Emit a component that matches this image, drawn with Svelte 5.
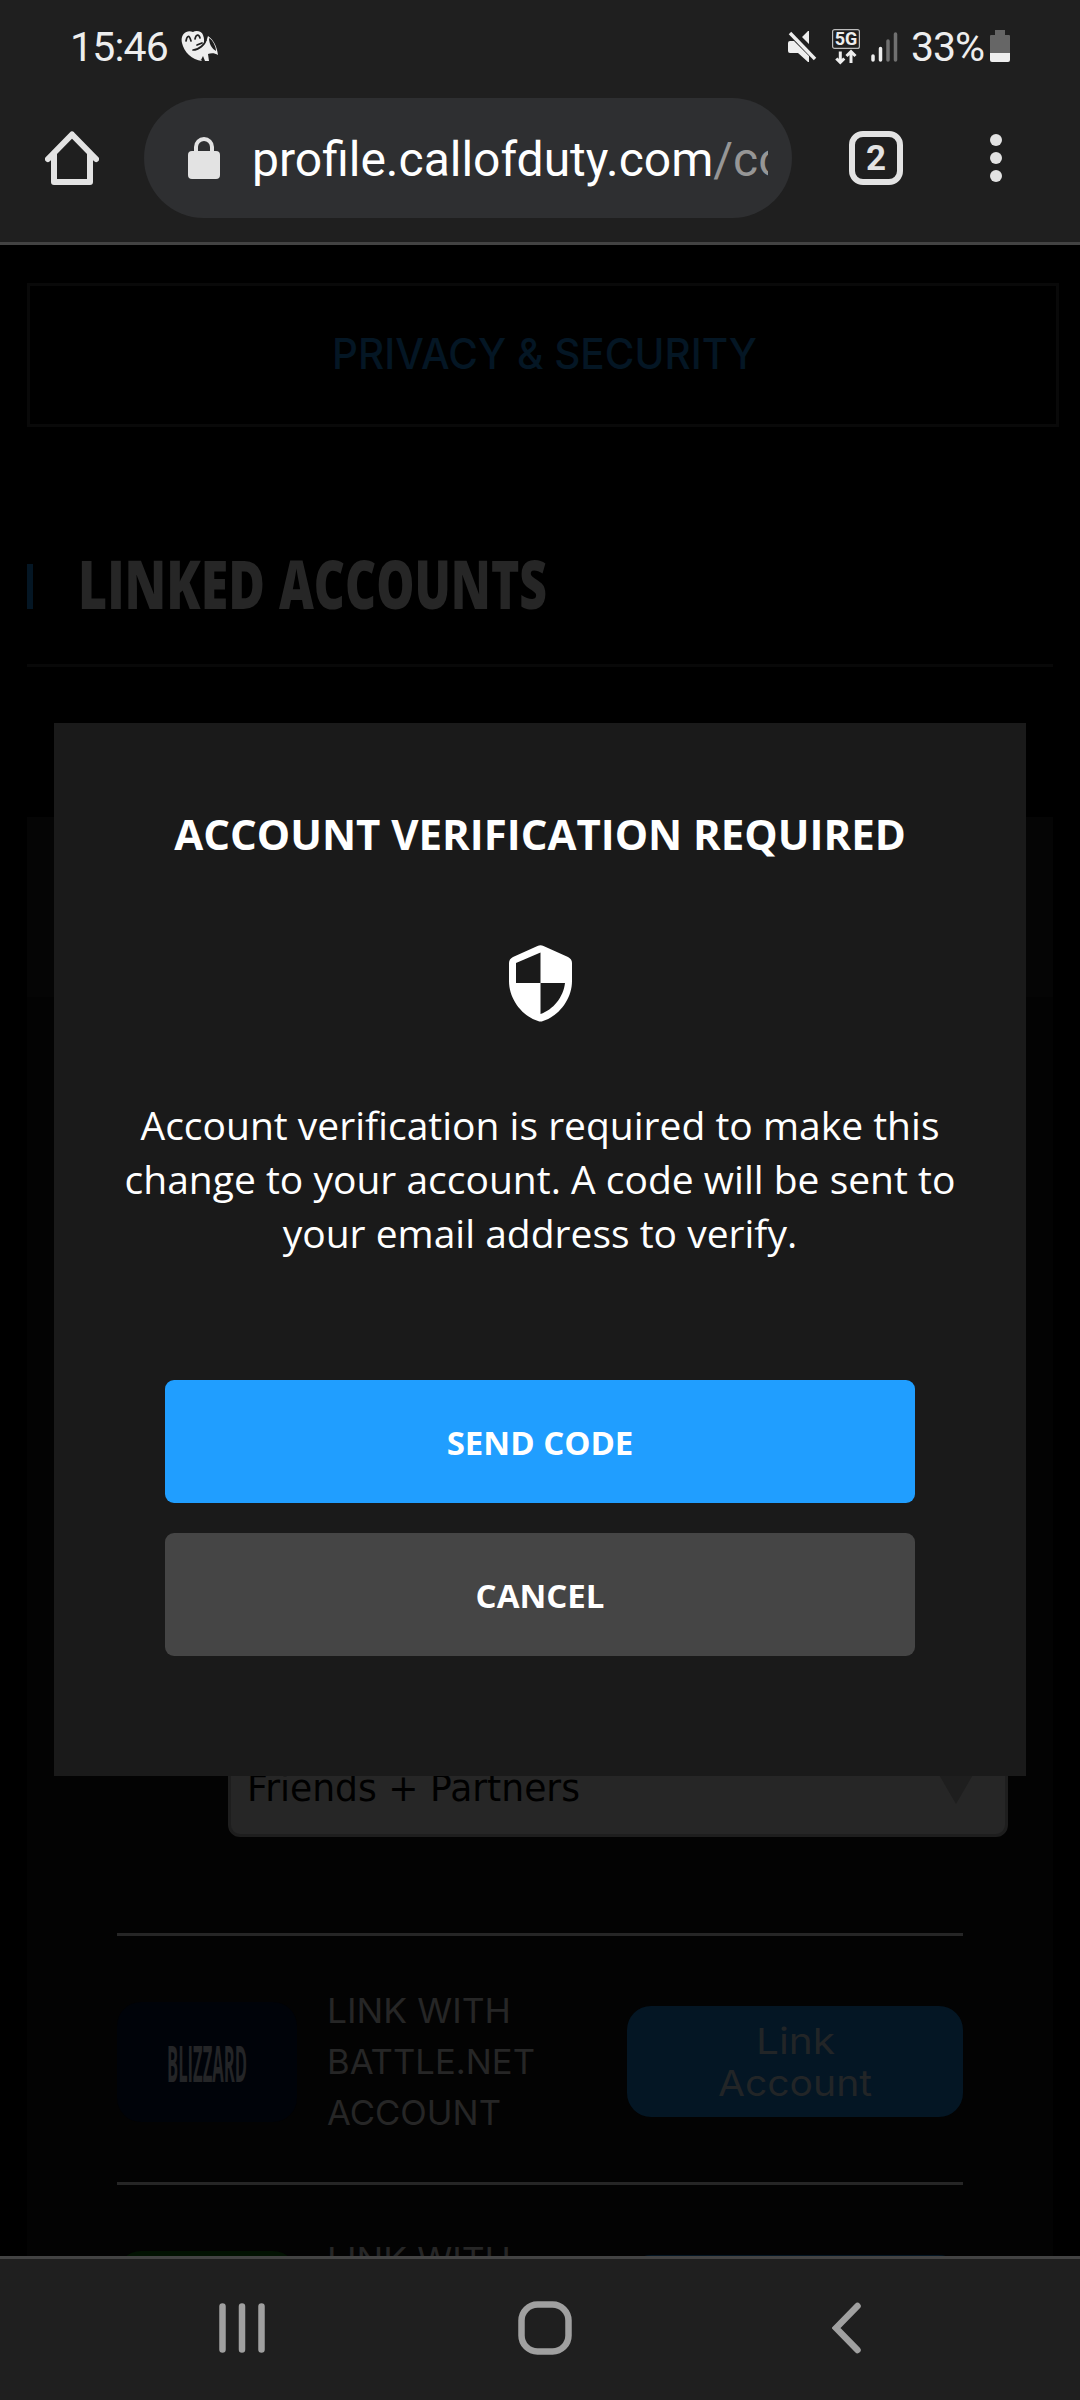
<script>
  const links = [
    { brand: 'blizzard', lines: [['LINK WITH', 184], ['BATTLE.NET', 208], ['ACCOUNT', 174]] },
    { brand: 'xbox', lines: [['LINK WITH', 184], ['XBOX', 96], ['ACCOUNT', 174]] }
  ];
</script>

{#snippet fitted(text, width, baseline, height)}
  <svg class="fitted" {width} {height}>
    <text x="0" y={baseline} textLength={width} lengthAdjust="spacingAndGlyphs">{text}</text>
  </svg>
{/snippet}

<div class="screen">
  <header>
    <div class="status">
      <span class="clock">15:46</span>
      <svg class="app-icon" width="38" height="32" viewBox="0 0 38 32">
        <path d="M12 2C15 0 21 1 22 5C24 10 23 14 21 17L16 20C14 23 17 27 21 31C11 30 3 22 1 13C-1 5 5-1 12 2Z" fill="#eee" />
        <path d="M15 20C20 19 25 14 27 6C33 10 36 17 37 25C34 23 30 23 27 24L28 31H24L22 26L20 30C17 28 14 25 15 20Z" fill="#eee" />
        <path d="M5 11C6 6 8 4 10 11M14 9C15 4 18 4 19 8M12 20C18 20 24 14 25 10M16 15L21 13" fill="none" stroke="#1f1f1f" stroke-width="1.7" stroke-linecap="round" />
        <path d="M28 8C32 10 35 17 35 21C31 19 28 14 28 8Z" fill="#1f1f1f" />
      </svg>
      <div class="indicators">
        <svg width="29" height="32" viewBox="0 0 29 32">
          <path d="M0 12Q0 10 2 10H6L21 25V31H20L10 22H2Q0 22 0 20ZM21 0V13L14 6L20 0Z" fill="#eee" />
          <path d="M2 2L27 28" stroke="#eee" stroke-width="3.4" />
        </svg>
        <svg class="net" width="28" height="36" viewBox="0 0 28 36">
          <rect x=".6" y=".6" width="26.8" height="18.8" rx="2" fill="none" stroke="#bbb" stroke-width="1.2" />
          <text x="14" y="16.3" text-anchor="middle" class="gen">5G</text>
          <path d="M8.300 22.500V33M4.300 29.500L8.300 33.500L12.300 29.500M19 34V24M14.500 27L19 22.500L23.500 27" fill="none" stroke="#eee" stroke-width="3" />
        </svg>
        <svg class="signal" width="28" height="30" viewBox="0 0 28 30">
          <path d="M2 24V28M9.500 16.500V28" stroke="#eee" stroke-width="3.500" stroke-linecap="round" />
          <path d="M17 9V28M24.500 2V28" stroke="#707070" stroke-width="3.500" stroke-linecap="round" />
        </svg>
        <span class="percent">33%</span>
        <svg class="battery" width="20" height="32" viewBox="0 0 20 32">
          <path d="M5 0H15V5H19Q20 5 20 6V23H0V6Q0 5 1 5H5Z" fill="#666" />
          <path d="M0 23H20V30Q20 32 18 32H2Q0 32 0 30Z" fill="#eee" />
        </svg>
      </div>
    </div>
    <div class="toolbar">
      <svg class="home" width="54" height="54" viewBox="0 0 54 54">
        <path d="M3 28L27 3.500L51 28M9 23V51H45V23" fill="none" stroke="#e3e3e3" stroke-width="6" stroke-linecap="round" stroke-linejoin="round" />
      </svg>
      <div class="address">
        <svg width="32" height="42" viewBox="0 0 32 42">
          <rect y="14" width="32" height="28" rx="4" fill="#e3e3e3" />
          <path d="M8 15V10a8 8 0 0 1 16 0V15" fill="none" stroke="#e3e3e3" stroke-width="4" />
        </svg>
        <div class="url">profile.callofduty.com<span>/cod/info</span></div>
      </div>
      <div class="tabs">2</div>
      <svg class="more" width="12" height="48" viewBox="0 0 12 48">
        <circle cx="6" cy="6" r="6" /><circle cx="6" cy="24" r="6" /><circle cx="6" cy="42" r="6" />
      </svg>
    </div>
  </header>

  <main>
    <div class="privacy">{@render fitted('PRIVACY & SECURITY', 425, 31, 32)}</div>
    <div class="section">
      <i></i>
      <h2>
        {@render fitted('LINKED', 187, 48, 48)}
        {@render fitted('ACCOUNTS', 268, 48, 48)}
      </h2>
    </div>
    <div class="panel">
      <div class="panel-head"></div>
      <div class="select">
        {@render fitted('Friends + Partners', 333, 29, 32)}
        <svg class="arrow" width="36" height="31" viewBox="0 0 36 31"><path d="M0 0H36L18 31Z" fill="#1e1e1e" /></svg>
      </div>
      <ul>
        {#each links as link}
          <li>
            <div class="tile {link.brand}">
              {#if link.brand === 'blizzard'}
                <svg width="80" height="38" viewBox="0 0 80 38">
                  <text x="0" y="37" textLength="80" lengthAdjust="spacingAndGlyphs">BLIZZARD</text>
                </svg>
              {/if}
            </div>
            <div class="label">
              {#each link.lines as [text, width]}
                {@render fitted(text, width, 37.5, 51)}
              {/each}
            </div>
            <button class="link">
              {@render fitted('Link', 79, 34, 42)}
              {@render fitted('Account', 154, 34, 42)}
            </button>
          </li>
        {/each}
      </ul>
    </div>

    <div class="modal">
      <h1>ACCOUNT VERIFICATION REQUIRED</h1>
      <svg class="shield" width="63" height="77" viewBox="0 0 63 77">
        <path fill-rule="evenodd" d="M28.500 1Q31.500-.6 34.500 1L59 12Q63 14 63 18V36C63 54 50 71 34 76Q31.500 77 29 76C13 71 0 54 0 36V18Q0 14 4 12ZM31.500 7.500L7 18V38H31.500ZM31.500 38V69C44 65 54.500 52 56 38Z" fill="#fff" />
      </svg>
      <p>Account verification is required to make this<br />change to your account. A code will be sent to<br />your email address to verify.</p>
      <button class="send">SEND CODE</button>
      <button class="cancel">CANCEL</button>
    </div>
  </main>

  <nav>
    <svg width="46" height="50" viewBox="0 0 46 50">
      <path d="M3.500 3.500V46.500M23 3.500V46.500M42.500 3.500V46.500" />
    </svg>
    <svg class="nav-home" width="54" height="54" viewBox="0 0 54 54">
      <rect x="3.500" y="3.500" width="47" height="47" rx="16" />
    </svg>
    <svg width="29" height="52" viewBox="0 0 29 52">
      <path d="M25.500 4L4 26L25.500 48" />
    </svg>
  </nav>
</div>

<style>
  :global(body) { margin: 0; background: #000; }
  .screen { width: 1080px; height: 2400px; display: flex; flex-direction: column; overflow: hidden; background: #000; font-family: "Open Sans", sans-serif; }
  svg { display: block; flex: none; }
  .fitted { overflow: visible; fill: currentColor; }

  header { box-sizing: border-box; height: 245px; flex: none; background: #1f1f1f; border-bottom: 3px solid #434343; font-family: Roboto, sans-serif; }
  .status { height: 98px; box-sizing: border-box; padding: 0 70px 5px 70px; display: flex; align-items: center; color: #eee; font-size: 41px; }
  .clock { letter-spacing: -.8px; padding-top: 1px; }
  .app-icon { margin-left: 13px; margin-top: -1px; }
  .indicators { margin-left: auto; display: flex; align-items: center; }
  .net { margin-left: 15px; }
  .gen { font-size: 18px; font-weight: 700; fill: #eee; }
  .signal { margin-left: 11px; }
  .percent { margin-left: 12px; padding-top: 1px; letter-spacing: -1px; }
  .battery { margin-left: 6px; margin-top: -2px; }

  .toolbar { height: 120px; display: flex; align-items: center; }
  .home { margin-left: 45px; }
  .address { box-sizing: border-box; width: 648px; height: 120px; margin-left: 45px; padding: 0 24px 0 44px; border-radius: 60px; background: #2e2f31; display: flex; align-items: center; gap: 32px; }
  .url { flex: 1; min-width: 0; overflow: hidden; white-space: nowrap; color: #fff; font-size: 48px; line-height: 64px; padding-top: 3px; }
  .url span { color: #969696; }
  .tabs { box-sizing: border-box; width: 54px; height: 54px; margin-left: 57px; border: 6px solid #e3e3e3; border-radius: 14px; color: #e3e3e3; font-size: 35px; font-weight: 700; line-height: 43px; text-align: center; }
  .more { margin-left: 87px; fill: #e3e3e3; }

  main { position: relative; height: 2011px; flex: none; overflow: hidden; }
  .privacy { box-sizing: border-box; width: 1032px; height: 144px; margin: 38px 0 0 27px; border: 3px solid #090909; display: flex; align-items: center; justify-content: center; padding: 0 0 2px 2px; color: #041624; font: 500 42px Inter, sans-serif; }
  .section { width: 1026px; height: 115px; margin: 122px 0 0 27px; border-bottom: 3px solid #080808; display: flex; }
  .section i { width: 6px; height: 45px; margin-top: 15px; background: #041624; }
  h2 { display: flex; gap: 14px; margin: 12px 0 0 45px; color: #262626; font-size: 67px; font-weight: 800; }
  .panel { width: 1026px; margin: 150px 0 0 27px; background: #030303; }
  .panel-head { height: 180px; background: #050505; }
  .select { box-sizing: border-box; width: 780px; height: 120px; margin: 720px 0 96px 201px; padding: 22px 31px 0 16px; border: 3px solid #1e1e1e; border-radius: 12px; background: #262626; color: #000; display: flex; align-items: center; justify-content: space-between; font: 400 37px "DejaVu Sans", sans-serif; }
  ul { list-style: none; margin: 0 72px 0 90px; padding: 0; width: 846px; }
  li { box-sizing: border-box; height: 249px; padding-top: 5px; border-top: 3px solid #262626; display: flex; align-items: center; }
  .tile { width: 180px; height: 120px; border-radius: 24px; display: flex; align-items: center; justify-content: center; }
  .blizzard { background: #000309; }
  .blizzard svg { margin-top: 4px; overflow: visible; fill: #242527; font: 700 51px "Open Sans", sans-serif; }
  .xbox { background: #021202; }
  .label { margin-left: 30px; color: #262626; font: 400 34px Inter, sans-serif; }
  button { border: 0; padding: 0; }
  .link { width: 336px; height: 111px; margin-left: auto; border-radius: 24px; background: #041624; color: #222527; display: flex; flex-direction: column; align-items: center; justify-content: center; font: 400 36px Inter, sans-serif; }

  .modal { position: absolute; left: 54px; top: 478px; box-sizing: border-box; width: 972px; height: 1053px; padding-top: 81px; background: #1a1a1a; color: #fff; display: flex; flex-direction: column; align-items: center; }
  h1 { margin: 0; font-size: 42px; line-height: 60px; font-weight: 700; white-space: nowrap; }
  .shield { margin-top: 81px; }
  p { margin: 76px 0 0; font-size: 39px; line-height: 54px; text-align: center; white-space: nowrap; }
  .modal button { box-sizing: border-box; width: 750px; height: 123px; padding-top: 2px; border-radius: 9px; color: #fff; font: 700 33px/46px "Open Sans", sans-serif; }
  .modal .send { margin-top: 120px; background: #209eff; }
  .modal .cancel { margin-top: 30px; background: #454545; }

  nav { box-sizing: border-box; height: 144px; flex: none; padding: 0 219px 3px; border-top: 3px solid #434343; background: #1f1f1f; display: flex; align-items: center; justify-content: space-between; }
  nav svg { fill: none; stroke: #a0a0a0; stroke-width: 6.5px; stroke-linecap: round; }
  .nav-home { margin-right: 8px; }
</style>
